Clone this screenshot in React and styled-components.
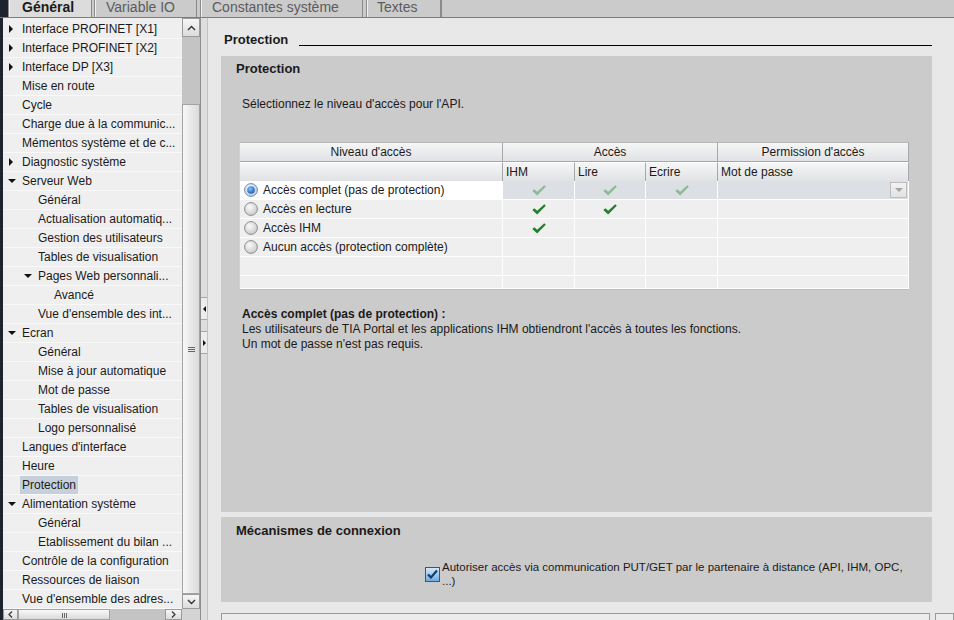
import styled, { createGlobalStyle } from "styled-components";

const GlobalStyle = createGlobalStyle`
  html, body {
    margin: 0;
    padding: 0;
    background: #e8e8e8;
  }
  body {
    font-family: "Liberation Sans", Arial, sans-serif;
    font-size: 12px;
    color: #1a1a1a;
  }
  #root {
    width: 954px;
    height: 620px;
    overflow: hidden;
  }
`;

const Window = styled.div`
  width: 954px;
  height: 620px;
  display: flex;
  flex-direction: column;
  background: #e8e8e8;
  overflow: hidden;
`;

/* ---------- tabs ---------- */

const TabBar = styled.div`
  display: flex;
  height: 17px;
  flex-shrink: 0;
  background: #cbcbcb;
  border-bottom: 1px solid #7c7c7c;
`;

const TabEdge = styled.div`
  width: 8px;
  background: #1d2430;
`;

const Tab = styled.div`
  width: ${(p) => p.$w}px;
  box-sizing: border-box;
  padding-left: ${(p) => p.$pad}px;
  margin-right: ${(p) => p.$gap}px;
  font-size: 14px;
  line-height: 14px;
  white-space: nowrap;
  overflow: hidden;
  color: ${(p) => (p.$active ? "#1a1a1a" : "#5c5c5c")};
  font-weight: ${(p) => (p.$active ? 700 : 400)};
  background: ${(p) => (p.$active ? "#dcdcdc" : "#cbcbcb")};
  border-left: 1px solid #8a8a8a;
  border-right: 1px solid #8a8a8a;
  box-shadow: inset 1px 0 #f2f2f2;
`;

const TabFill = styled.div`
  flex: 1;
  border-left: 1px solid #8a8a8a;
`;

/* ---------- body ---------- */

const Body = styled.div`
  flex: 1;
  display: flex;
  min-height: 0;
`;

const DarkEdge = styled.div`
  width: 3px;
  background: #1d2430;
`;

const LeftPane = styled.div`
  width: 197px;
  display: flex;
  flex-direction: column;
`;

const LeftTop = styled.div`
  flex: 1;
  display: flex;
  min-height: 0;
`;

const Tree = styled.div`
  width: 179px;
  padding-top: 2px;
  background: #efefef;
  overflow: hidden;
`;

const TreeRow = styled.div`
  height: 19px;
  box-sizing: border-box;
  display: flex;
  align-items: center;
  padding-left: ${(p) => 6 + p.$level * 16}px;
  border-bottom: 1px solid #f9f9f9;
  white-space: nowrap;
`;

const ArrowSlot = styled.div`
  width: 13px;
  flex-shrink: 0;
  display: flex;
  align-items: center;
`;

const ArrowRight = styled.span`
  width: 0;
  height: 0;
  border-left: 4px solid #111;
  border-top: 4px solid transparent;
  border-bottom: 4px solid transparent;
`;

const ArrowDown = styled.span`
  width: 0;
  height: 0;
  margin-left: -1px;
  border-top: 4px solid #111;
  border-left: 4px solid transparent;
  border-right: 4px solid transparent;
`;

const TreeLabel = styled.span`
  padding: 0 2px;
  margin-left: -2px;
  line-height: 18px;
  background: ${(p) => (p.$selected ? "#c6d0dc" : "transparent")};
`;

/* ---------- scrollbars ---------- */

const VScroll = styled.div`
  width: 18px;
  display: flex;
  flex-direction: column;
  background: #c4c4c4;
`;

const ScrollBtn = styled.div`
  height: ${(p) => p.$h}px;
  width: ${(p) => (p.$w ? `${p.$w}px` : "auto")};
  box-sizing: border-box;
  display: flex;
  align-items: center;
  justify-content: center;
  border: 1px solid #9a9a9a;
  background: linear-gradient(#f6f6f6, #dcdcdc);
  flex-shrink: 0;
`;

const VTrack = styled.div`
  height: 67px;
  background: #c4c4c4;
`;

const VThumb = styled.div`
  flex: 1;
  box-sizing: border-box;
  display: flex;
  align-items: center;
  justify-content: center;
  border: 1px solid #a3a3a3;
  background: linear-gradient(90deg, #f8f8f8, #dadada);
`;

const HScroll = styled.div`
  height: 11px;
  display: flex;
  background: #c4c4c4;
  overflow: hidden;
`;

const HThumb = styled.div`
  width: 92px;
  box-sizing: border-box;
  display: flex;
  justify-content: center;
  padding-top: 3px;
  border: 1px solid #a3a3a3;
  background: linear-gradient(#f8f8f8, #dadada);
`;

const HGap = styled.div`
  flex: 1;
`;

const Corner = styled.div`
  width: 18px;
  background: #d4d4d4;
`;

const Splitter = styled.div`
  width: 8px;
  box-sizing: border-box;
  display: flex;
  flex-direction: column;
  gap: 11px;
  padding-top: 279px;
  background: #dedede;
  border-left: 1px solid #8f8f8f;
  border-right: 1px solid #c2c2c2;
`;

const SplitBtn = styled.div`
  height: 23px;
  box-sizing: border-box;
  display: flex;
  align-items: center;
  justify-content: center;
  background: #ececec;
  border-top: 1px solid #a6a6a6;
  border-bottom: 1px solid #a6a6a6;
`;

const TriLeft = styled.span`
  width: 0;
  height: 0;
  border-right: 3px solid #111;
  border-top: 3px solid transparent;
  border-bottom: 3px solid transparent;
`;

const TriRight = styled.span`
  width: 0;
  height: 0;
  border-left: 3px solid #111;
  border-top: 3px solid transparent;
  border-bottom: 3px solid transparent;
`;

/* ---------- content ---------- */

const Content = styled.div`
  flex: 1;
  display: flex;
  flex-direction: column;
  padding: 0 22px 0 13px;
  min-width: 0;
`;

const PageHead = styled.div`
  height: 30px;
  display: flex;
  align-items: flex-end;
  padding-left: 3px;
  margin-bottom: 8px;
`;

const PageTitle = styled.span`
  font-size: 13px;
  font-weight: 700;
  line-height: 16px;
  margin-right: 11px;
`;

const Rule = styled.div`
  flex: 1;
  border-bottom: 1px solid #000;
  margin-bottom: 2px;
`;

const Section = styled.div`
  height: ${(p) => p.$h}px;
  margin-top: ${(p) => p.$mt || 0}px;
  background: #cbcbcb;
  flex-shrink: 0;
  display: flex;
  flex-direction: column;
`;

const SectionTitle = styled.div`
  padding: ${(p) => p.$pt}px 15px 0;
  font-size: 13px;
  font-weight: 700;
  line-height: 16px;
`;

const Intro = styled.div`
  margin-top: 20px;
  padding-left: 21px;
  font-size: 12px;
  line-height: 14px;
`;

const TableBox = styled.div`
  width: 669px;
  margin: 31px 0 0 18px;
  background: #efefef;
  border-left: 1px solid #d0d0d0;
  border-bottom: 1px solid #bdbdbd;
`;

const GridRow = styled.div`
  display: grid;
  grid-template-columns: 263px 72px 71px 72px 191px;
  height: ${(p) => p.$h || 19}px;
  overflow: hidden;
`;

const HeadCell = styled.div`
  grid-column: ${(p) => p.$span || "auto"};
  box-sizing: border-box;
  padding: 0 3px;
  font-size: 12px;
  line-height: 18px;
  text-align: ${(p) => (p.$center ? "center" : "left")};
  white-space: nowrap;
  background: linear-gradient(#f6f6f6, #e0e2e5);
  border-right: 1px solid #a8a8a8;
  border-bottom: 1px solid #a8a8a8;
  border-top: 1px solid ${(p) => (p.$top ? "#b8b8b8" : "#ffffff")};
`;

const Cell = styled.div`
  box-sizing: border-box;
  display: flex;
  align-items: center;
  justify-content: ${(p) => (p.$left ? "flex-start" : "center")};
  gap: 5px;
  padding-left: ${(p) => (p.$left ? 4 : 0)}px;
  background: ${(p) => p.$bg || "#efefef"};
  border-right: 1px solid #ffffff;
  border-bottom: 1px solid #ffffff;
  font-size: 12px;
  white-space: nowrap;
  position: relative;
`;

const DropBtn = styled.div`
  position: absolute;
  right: 1px;
  top: 1px;
  width: 17px;
  height: 16px;
  box-sizing: border-box;
  display: flex;
  align-items: center;
  justify-content: center;
  border: 1px solid #bdbdbd;
  background: linear-gradient(#f2f2f2, #e2e2e2);
`;

const DropTri = styled.span`
  width: 0;
  height: 0;
  border-top: 4px solid #a5a5a5;
  border-left: 4px solid transparent;
  border-right: 4px solid transparent;
`;

const Desc = styled.div`
  margin-top: 17px;
  padding-left: 21px;
  font-size: 12px;
  line-height: 15px;
`;

const DescHead = styled.div`
  font-weight: 700;
`;

const OptionRow = styled.div`
  margin-top: 21px;
  padding-left: 204px;
  display: flex;
  align-items: center;
  gap: 2px;
`;

const OptionText = styled.div`
  width: 465px;
  font-size: 11.5px;
  line-height: 14px;
`;

const BottomBar = styled.div`
  margin-top: 11px;
  margin-right: -22px;
  flex: 1;
  display: flex;
  gap: 5px;
`;

const BottomTrack = styled.div`
  flex: 1;
  border: 1px solid #9a9a9a;
  border-bottom: none;
  background: #ececec;
`;

const BottomBtn = styled.div`
  width: 17px;
  border: 1px solid #9a9a9a;
  border-bottom: none;
  background: #ececec;
`;

/* ---------- drawings ---------- */

const Chevron = ({ up }) => (
  <svg width="9" height="6" viewBox="0 0 9 6">
    <path
      d={up ? "M1 5 L4.5 1.5 L8 5" : "M1 1 L4.5 4.5 L8 1"}
      fill="none"
      stroke="#333"
      strokeWidth="1.4"
    />
  </svg>
);

const SmallArrow = ({ left }) => (
  <svg width="5" height="7" viewBox="0 0 5 7">
    <path d={left ? "M4 0.5 L1 3.5 L4 6.5" : "M1 0.5 L4 3.5 L1 6.5"} fill="none" stroke="#333" strokeWidth="1.2" />
  </svg>
);

const Grip = ({ vertical }) =>
  vertical ? (
    <svg width="5" height="5" viewBox="0 0 5 5">
      <path d="M0.5 0 V5 M2.5 0 V5 M4.5 0 V5" stroke="#666" strokeWidth="1" />
    </svg>
  ) : (
    <svg width="9" height="7" viewBox="0 0 9 7">
      <path d="M1 1.5 H8 M1 3.5 H8 M1 5.5 H8" stroke="#666" strokeWidth="1" />
    </svg>
  );

const Check = ({ faded }) => (
  <svg width="14" height="11" viewBox="0 0 13 10">
    <path
      d="M0.3 5.4 L2.2 3.8 L4.8 6.1 L11.4 0.2 L12.8 1.5 L4.8 9.7 Z"
      fill={faded ? "#8dbb97" : "#1f822b"}
    />
  </svg>
);

const Radio = ({ on }) => (
  <svg width="14" height="14" viewBox="0 0 14 14">
    <defs>
      <radialGradient id="radioBg" cx="40%" cy="35%" r="75%">
        <stop offset="0" stopColor="#fafafa" />
        <stop offset="1" stopColor="#c4c4c4" />
      </radialGradient>
      <radialGradient id="radioDot" cx="40%" cy="35%" r="70%">
        <stop offset="0" stopColor="#7cc4ff" />
        <stop offset="1" stopColor="#1658b8" />
      </radialGradient>
    </defs>
    <circle cx="7" cy="7" r="6.4" fill="url(#radioBg)" stroke={on ? "#5d8fbf" : "#8c8c8c"} />
    {on && <circle cx="7" cy="7" r="3.8" fill="url(#radioDot)" />}
  </svg>
);

const CheckBox = () => (
  <svg width="15" height="15" viewBox="0 0 15 15">
    <defs>
      <linearGradient id="cbFill" x1="0" y1="0" x2="0" y2="1">
        <stop offset="0" stopColor="#d6ecfb" />
        <stop offset="1" stopColor="#6aa9de" />
      </linearGradient>
    </defs>
    <rect x="0.5" y="0.5" width="14" height="14" fill="url(#cbFill)" stroke="#2b5b8e" />
    <path d="M3 7.5 L6 10.5 L12 3.5" fill="none" stroke="#16386a" strokeWidth="2.2" />
  </svg>
);

/* ---------- data ---------- */

const treeItems = [
  [0, "r", "Interface PROFINET [X1]"],
  [0, "r", "Interface PROFINET [X2]"],
  [0, "r", "Interface DP [X3]"],
  [0, null, "Mise en route"],
  [0, null, "Cycle"],
  [0, null, "Charge due à la communic..."],
  [0, null, "Mémentos système et de c..."],
  [0, "r", "Diagnostic système"],
  [0, "d", "Serveur Web"],
  [1, null, "Général"],
  [1, null, "Actualisation automatiq..."],
  [1, null, "Gestion des utilisateurs"],
  [1, null, "Tables de visualisation"],
  [1, "d", "Pages Web personnali..."],
  [2, null, "Avancé"],
  [1, null, "Vue d'ensemble des int..."],
  [0, "d", "Ecran"],
  [1, null, "Général"],
  [1, null, "Mise à jour automatique"],
  [1, null, "Mot de passe"],
  [1, null, "Tables de visualisation"],
  [1, null, "Logo personnalisé"],
  [0, null, "Langues d'interface"],
  [0, null, "Heure"],
  [0, null, "Protection", true],
  [0, "d", "Alimentation système"],
  [1, null, "Général"],
  [1, null, "Etablissement du bilan ..."],
  [0, null, "Contrôle de la configuration"],
  [0, null, "Ressources de liaison"],
  [0, null, "Vue d'ensemble des adres..."],
];

const levels = [
  { label: "Accès complet (pas de protection)", checks: [1, 1, 1], selected: true },
  { label: "Accès en lecture", checks: [1, 1, 0] },
  { label: "Accès IHM", checks: [1, 0, 0] },
  { label: "Aucun accès (protection complète)", checks: [0, 0, 0] },
];

const tabs = [
  { label: "Général", w: 84, pad: 13, gap: 2, active: true },
  { label: "Variable IO", w: 103, pad: 11, gap: 3 },
  { label: "Constantes système", w: 163, pad: 11, gap: 3 },
  { label: "Textes", w: 75, pad: 10, gap: 0 },
];

export default function App() {
  return (
    <Window>
      <GlobalStyle />
      <TabBar>
        <TabEdge />
        {tabs.map((t) => (
          <Tab key={t.label} $w={t.w} $pad={t.pad} $gap={t.gap} $active={t.active}>
            {t.label}
          </Tab>
        ))}
        <TabFill />
      </TabBar>

      <Body>
        <DarkEdge />
        <LeftPane>
          <LeftTop>
            <Tree>
              {treeItems.map(([level, arrow, label, selected], i) => (
                <TreeRow key={i} $level={level}>
                  <ArrowSlot>
                    {arrow === "r" && <ArrowRight />}
                    {arrow === "d" && <ArrowDown />}
                  </ArrowSlot>
                  <TreeLabel $selected={selected}>{label}</TreeLabel>
                </TreeRow>
              ))}
            </Tree>
            <VScroll>
              <ScrollBtn $h={19}>
                <Chevron up />
              </ScrollBtn>
              <VTrack />
              <VThumb>
                <Grip />
              </VThumb>
              <ScrollBtn $h={15}>
                <Chevron />
              </ScrollBtn>
            </VScroll>
          </LeftTop>
          <HScroll>
            <ScrollBtn $h={11} $w={15}>
              <SmallArrow left />
            </ScrollBtn>
            <HThumb>
              <Grip vertical />
            </HThumb>
            <HGap />
            <ScrollBtn $h={11} $w={17}>
              <SmallArrow />
            </ScrollBtn>
            <Corner />
          </HScroll>
        </LeftPane>

        <Splitter>
          <SplitBtn>
            <TriLeft />
          </SplitBtn>
          <SplitBtn>
            <TriRight />
          </SplitBtn>
        </Splitter>

        <Content>
          <PageHead>
            <PageTitle>Protection</PageTitle>
            <Rule />
          </PageHead>

          <Section $h={456}>
            <SectionTitle $pt={5}>Protection</SectionTitle>
            <Intro>Sélectionnez le niveau d'accès pour l'API.</Intro>

            <TableBox>
              <GridRow $h={20}>
                <HeadCell $center $top>Niveau d'accès</HeadCell>
                <HeadCell $center $top $span="span 3">Accès</HeadCell>
                <HeadCell $center $top>Permission d'accès</HeadCell>
              </GridRow>
              <GridRow $h={19}>
                <HeadCell />
                <HeadCell>IHM</HeadCell>
                <HeadCell>Lire</HeadCell>
                <HeadCell>Ecrire</HeadCell>
                <HeadCell>Mot de passe</HeadCell>
              </GridRow>
              {levels.map((lv) => (
                <GridRow key={lv.label}>
                  <Cell $left $bg={lv.selected ? "#ffffff" : undefined}>
                    <Radio on={lv.selected} />
                    {lv.label}
                  </Cell>
                  {lv.checks.map((c, j) => (
                    <Cell key={j} $bg={lv.selected ? "#dcdfe3" : undefined}>
                      {c ? <Check faded={lv.selected} /> : null}
                    </Cell>
                  ))}
                  <Cell $bg={lv.selected ? "#dcdfe3" : undefined}>
                    {lv.selected && (
                      <DropBtn>
                        <DropTri />
                      </DropBtn>
                    )}
                  </Cell>
                </GridRow>
              ))}
              <GridRow>
                <Cell />
                <Cell />
                <Cell />
                <Cell />
                <Cell />
              </GridRow>
              <GridRow $h={13}>
                <Cell />
                <Cell />
                <Cell />
                <Cell />
                <Cell />
              </GridRow>
            </TableBox>

            <Desc>
              <DescHead>Accès complet (pas de protection) :</DescHead>
              <div>
                Les utilisateurs de TIA Portal et les applications IHM obtiendront l'accès à toutes les
                fonctions.
              </div>
              <div>Un mot de passe n'est pas requis.</div>
            </Desc>
          </Section>

          <Section $h={85} $mt={5}>
            <SectionTitle $pt={6}>Mécanismes de connexion</SectionTitle>
            <OptionRow>
              <CheckBox />
              <OptionText>
                Autoriser accès via communication PUT/GET par le partenaire à distance (API, IHM,
                OPC, ...)
              </OptionText>
            </OptionRow>
          </Section>

          <BottomBar>
            <BottomTrack />
            <BottomBtn />
          </BottomBar>
        </Content>
      </Body>
    </Window>
  );
}
